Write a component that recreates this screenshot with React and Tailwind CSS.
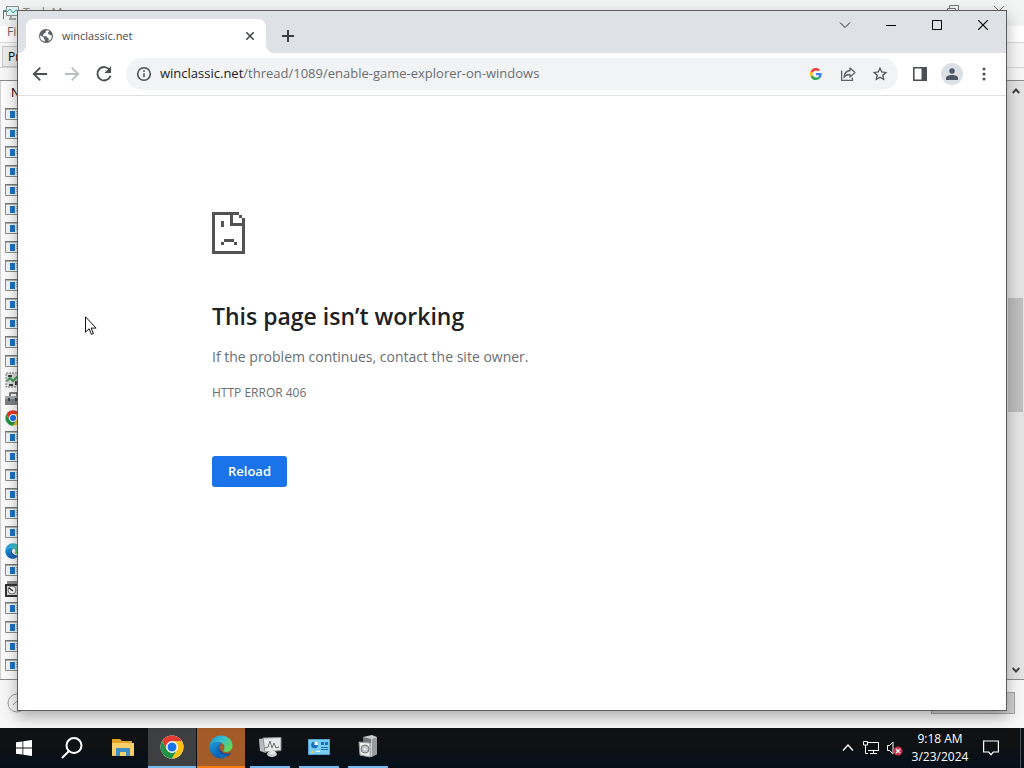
import clsx from 'clsx';

const UI_FONT = "font-['Segoe_UI','Open_Sans',sans-serif]";

const SPECIAL_ROWS = { 14: 'services', 15: 'toolbox', 16: 'chrome', 23: 'edge', 25: 'disk' };
const PROCESSES = Array.from({ length: 30 }, (_, i) => SPECIAL_ROWS[i] || 'app');

/* ─── ICONS ─── */

function ChromeLogo({ className }) {
  return (
    <svg viewBox="0 0 48 48" className={className} aria-hidden="true">
      <circle cx="24" cy="24" r="23" fill="#fff" />
      <path d="M4.1 12.5A23 23 0 0 1 43.9 12.5H24a11.5 11.5 0 0 0-10 17.2z" fill="#e33b2e" />
      <path d="M43.9 12.5A23 23 0 0 1 24 47l10-17.3a11.5 11.5 0 0 0-10-17.2z" fill="#fbc116" />
      <path d="M24 47A23 23 0 0 1 4.1 12.5L14 29.7a11.5 11.5 0 0 0 20 0z" fill="#229342" />
      <circle cx="24" cy="24" r="11.5" fill="#fff" />
      <circle cx="24" cy="24" r="9" fill="#1a73e8" />
    </svg>
  );
}

function EdgeLogo({ className }) {
  return (
    <svg viewBox="0 0 48 48" className={className} aria-hidden="true">
      <defs>
        <linearGradient id="edge-top" x1="0" y1="0" x2="1" y2="0.6">
          <stop offset="0" stopColor="#1a8fd8" />
          <stop offset="0.5" stopColor="#35bdd0" />
          <stop offset="1" stopColor="#63d95a" />
        </linearGradient>
        <linearGradient id="edge-base" x1="0" y1="0" x2="0.5" y2="1">
          <stop offset="0" stopColor="#1b9de2" />
          <stop offset="1" stopColor="#0a5cad" />
        </linearGradient>
      </defs>
      <path d="M1 23C2 10 12 1 24 1c13 0 23 9 23 20 0 8-6 13-12 13-5 0-7-2-6-4 1-1 2-3 2-6 0-6-6-10-13-10C9 14 2 18 1 23z" fill="url(#edge-top)" />
      <path d="M1 23c1-6 8-9 16-9 4 0 8 2 10 4-6-1-11 4-11 12 0 8 5 15 12 17C13 49 0 38 1 23z" fill="url(#edge-base)" />
      <path d="M19 23c-4 8 0 18 11 20 5 1 10-1 14-6 1-1 0-2-1-1-9 4-21-1-24-13z" fill="#0d4c93" />
      <path d="M28 47c-9-3-14-11-12-20 1-5 4-8 8-9-3 3-5 6-4 10 1 8 8 13 17 11-2 5-5 7-9 8z" fill="#1267b4" />
    </svg>
  );
}

function ProcessIcon({ kind }) {
  if (kind === 'chrome') return <ChromeLogo className="size-4" />;
  if (kind === 'edge') return <EdgeLogo className="size-4" />;
  if (kind === 'services') {
    return (
      <svg viewBox="0 0 16 16" className="size-4" aria-hidden="true">
        <path d="M1 1h13v14H1z" fill="#d8dcd8" stroke="#777" strokeDasharray="2 1" />
        <path d="M2 9l3-3 3 3 5-5" stroke="#3f9a55" strokeWidth="2" fill="none" />
        <path d="M3 3h4v2H3zM4 12h4v2H4zM10 9h3v4h-3z" fill="#444" />
      </svg>
    );
  }
  if (kind === 'toolbox') {
    return (
      <svg viewBox="0 0 16 16" className="size-4" aria-hidden="true">
        <path d="M5 5V2h7v3" stroke="#555" strokeWidth="1.5" fill="none" />
        <path d="M0 5h16v9H0z" fill="#7b8286" />
        <path d="M0 5h16v3H0z" fill="#a4abae" />
        <path d="M3 7h2v3H3zM10 7h2v3h-2z" fill="#3d4245" />
      </svg>
    );
  }
  if (kind === 'disk') {
    return (
      <svg viewBox="0 0 16 16" className="size-4" aria-hidden="true">
        <path d="M2 0h14v3H2z" fill="#8b8b8b" />
        <path d="M1 4h13v11H1z" fill="#ddd" stroke="#333" strokeWidth="2" />
        <circle cx="7" cy="9" r="4" fill="#fff" stroke="#777" />
        <path d="M4 7l4 3" stroke="#333" strokeWidth="1.5" />
      </svg>
    );
  }
  return (
    <svg viewBox="0 0 16 16" className="size-4" aria-hidden="true">
      <path d="M.5 2.500h15v11H.5z" fill="#f3f5f6" stroke="#8b8f92" />
      <path d="M0 2h16v1.500H0z" fill="#74787b" />
      <path d="M5 5h5v7H5z" fill="#1b74c5" />
      <path d="M11 5.500h4M11 7.500h4M11 9.500h4" stroke="#92aec4" />
    </svg>
  );
}

/* ─── TASK MANAGER (behind) ─── */

function TaskManager() {
  return (
    <section className="absolute inset-0 flex flex-col overflow-hidden bg-[#f7f7f7] text-xs">
      <header className="flex h-[26px] shrink-0 items-center gap-1 bg-[#f2f3f3] pl-[3px] text-[#8a8a8a]">
        <svg viewBox="0 0 16 16" className="size-4" aria-hidden="true">
          <path d="M0 6v8M0 6h3" stroke="#3c8f8a" strokeWidth="2" fill="none" />
          <path d="M3.500 1.500h12v9h-12z" fill="#e3f4f5" stroke="#8d9496" />
          <path d="M4 7l3-3 3 4 3-3 2 1" stroke="#2aa39b" fill="none" />
          <path d="M8 11v2M6 14h7" stroke="#8d9496" strokeWidth="1.500" />
        </svg>
        <span>Task Manager</span>
        <div className="ml-auto flex h-full items-start gap-[34px] pt-[5px] pr-[19px]">
          <button aria-label="Restore">
            <svg viewBox="0 0 12 12" className="size-3" fill="none" stroke="#777" aria-hidden="true">
              <path d="M2.500 3V.500h9v8H9M.500 3.500h8v8h-8z" />
            </svg>
          </button>
          <button aria-label="Close">
            <svg viewBox="0 0 12 12" className="size-3" stroke="#777" aria-hidden="true">
              <path d="M1 1l10 10M11 1L1 11" />
            </svg>
          </button>
        </div>
      </header>
      <nav className="flex h-[17px] shrink-0 items-center border-b border-[#d9d9d9] bg-white pb-1 pl-[7px] text-[#666]">
        <button>File</button>
      </nav>
      <div className="flex h-[25px] shrink-0 items-end border-b border-[#d5d5d5] pl-[2px]">
        <button className="h-[21px] border border-[#c8c8c8] bg-[#ececec] px-[5px] text-black">Processes</button>
      </div>
      <div className="mt-3 flex min-h-0 flex-1 border-y border-[#8b8b8b] bg-[#fcfcfc]">
        <div className="min-w-0 flex-1 border-l border-[#d0d0d0]">
          <div className="flex h-[23px] items-center pl-[10px] text-black">Name</div>
          <ul>
            {PROCESSES.map((kind, i) => (
              <li key={i} className="flex h-[19px] items-center pl-1">
                <ProcessIcon kind={kind} />
              </li>
            ))}
          </ul>
        </div>
        <div className="flex w-[17px] flex-col items-center bg-[#e4e4e4]">
          <ScrollArrow up />
          <div className="w-full flex-[198]" />
          <div className="w-[15px] flex-[114] bg-[#bdbdbd]" />
          <div className="w-full flex-[248]" />
          <ScrollArrow />
        </div>
      </div>
      <footer className="flex h-12 shrink-0 justify-between pr-[9px] pl-[7px]">
        <svg viewBox="0 0 20 20" className="mt-[13px] size-5" fill="none" stroke="#9a9a9a" aria-hidden="true">
          <circle cx="10" cy="10" r="9" />
          <path d="M6 12l4-4 4 4" />
        </svg>
        <button aria-label="End task" className="mt-3 h-[22px] w-[84px] border border-[#a6a6a6] bg-[#cfcfcf]" />
      </footer>
    </section>
  );
}

function ScrollArrow({ up }) {
  return (
    <button className="flex h-[19px] w-full shrink-0 items-center justify-center" aria-label={up ? 'Scroll up' : 'Scroll down'}>
      <svg viewBox="0 0 8 6" className={clsx('h-[6px] w-2', !up && 'rotate-180')} fill="none" stroke="#444" strokeWidth="2" aria-hidden="true">
        <path d="M.7 5L4 1.500 7.300 5" />
      </svg>
    </button>
  );
}

/* ─── BROWSER ─── */

function TabStrip() {
  return (
    <header className="flex h-[42px] shrink-0 items-stretch bg-[#dee1e6] pl-2">
      <div className="relative mt-2 flex w-60 items-center rounded-t-lg bg-white px-3">
        <svg viewBox="0 0 8 8" className="absolute bottom-0 -left-2 size-2" fill="#fff" aria-hidden="true">
          <path d="M8 0v8H0a8 8 0 0 0 8-8z" />
        </svg>
        <svg viewBox="0 0 8 8" className="absolute -right-2 bottom-0 size-2" fill="#fff" aria-hidden="true">
          <path d="M0 0v8h8a8 8 0 0 1-8-8z" />
        </svg>
        <svg viewBox="0 0 16 16" className="size-4" aria-hidden="true">
          <circle cx="8" cy="8" r="7" fill="#5f6368" />
          <path d="M9 2.300c-1 .5-1.600 1.200-1.400 2C7.700 5 7 5.400 6 5.600c-.8.200-.3 1.400-1 1.700l.2.900h3c1 0 1 1 1.200 1.600.5.500 1.500.2 1.400 1.200l-.3 2.200A5.800 5.800 0 0 0 13.700 7c-.6.300-1.500.4-2-.2-.4-.5-1.500-.4-1.700-1.300-.2-.9.800-1.600 1.400-2.200A6 6 0 0 0 9 2.300z" fill="#fff" />
          <path d="M2.200 7.300c1 .8 2.300 1.200 3.200 2 .7.600.3 1.600 1 2 .7.500.4 1.500.3 2.400a5.900 5.900 0 0 1-4.500-6.400z" fill="#fff" />
        </svg>
        <span className="ml-2 flex-1 text-[11px] text-[#45494d]">winclassic.net</span>
        <button aria-label="Close tab">
          <svg viewBox="0 0 8 8" className="size-2" stroke="#3c4043" strokeWidth="1.500" aria-hidden="true">
            <path d="M.3.300l7.400 7.400M7.700.300L.3 7.700" />
          </svg>
        </button>
      </div>
      <button aria-label="New tab" className="mt-2 ml-4">
        <svg viewBox="0 0 12 12" className="size-3" stroke="#3c4043" strokeWidth="2" aria-hidden="true">
          <path d="M6 0v12M0 6h12" />
        </svg>
      </button>
      <div className="mb-[14px] ml-auto flex items-center">
        <button aria-label="Search tabs" className="flex w-[46px] justify-center">
          <svg viewBox="0 0 12 12" className="size-3" fill="none" stroke="#222" aria-hidden="true">
            <path d="M1 3.500l5 5 5-5" />
          </svg>
        </button>
        <button aria-label="Minimize" className="flex w-[46px] justify-center">
          <svg viewBox="0 0 10 10" className="size-[10px]" stroke="#000" aria-hidden="true">
            <path d="M0 5.500h10" />
          </svg>
        </button>
        <button aria-label="Maximize" className="flex w-[46px] justify-center">
          <svg viewBox="0 0 10 10" className="size-[10px]" fill="none" stroke="#000" aria-hidden="true">
            <path d="M.5.500h9v9h-9z" />
          </svg>
        </button>
        <button aria-label="Close" className="flex w-[46px] justify-center">
          <svg viewBox="0 0 10 10" className="size-[10px]" stroke="#000" strokeWidth="1.200" aria-hidden="true">
            <path d="M0 0l10 10M10 0L0 10" />
          </svg>
        </button>
      </div>
    </header>
  );
}

function Toolbar() {
  return (
    <div className="flex h-[43px] shrink-0 items-center border-b border-[#dfe1e4] bg-white pr-[14px] pl-3">
      <div className="flex items-center gap-3">
        <button aria-label="Back">
          <svg viewBox="0 0 24 24" className="size-5" fill="#4b4f53" aria-hidden="true">
            <path d="M20.500 10.800H7.400l5.700-5.700-1.600-1.600L3 12l8.500 8.500 1.600-1.600-5.700-5.700h13.100z" />
          </svg>
        </button>
        <button aria-label="Forward" disabled>
          <svg viewBox="0 0 24 24" className="size-5 rotate-180" fill="#bcbec1" aria-hidden="true">
            <path d="M20.500 10.800H7.400l5.700-5.700-1.600-1.600L3 12l8.500 8.500 1.600-1.600-5.700-5.700h13.100z" />
          </svg>
        </button>
        <button aria-label="Reload page">
          <svg viewBox="0 0 24 24" className="size-5" fill="none" stroke="#4b4f53" strokeWidth="2.300" aria-hidden="true">
            <path d="M19 7.600A8 8 0 1 0 19.800 14" />
            <path d="M20.500 2.800v8h-8z" fill="#4b4f53" stroke="none" />
          </svg>
        </button>
      </div>
      <div className="ml-3 flex h-8 flex-1 items-center rounded-full bg-[#f1f3f4] pr-[10px] pl-[10px]">
        <button aria-label="View site information">
          <svg viewBox="0 0 16 16" className="size-4" fill="none" stroke="#4b4f53" strokeWidth="1.500" aria-hidden="true">
            <circle cx="8" cy="8" r="6.300" />
            <path d="M8 7.200v4M8 4.300v1.600" />
          </svg>
        </button>
        <div className="ml-2 flex-1 text-[13px] text-[#6a6e73]">
          <span className="text-[#202124]">winclassic.net</span>/thread/1089/enable-game-explorer-on-windows
        </div>
        <div className="flex items-center gap-4">
          <button aria-label="Search with Google">
            <svg viewBox="0 0 48 48" className="size-4 p-[2px]" aria-hidden="true">
              <path d="M46.500 24.500c0-1.600-.2-3.200-.4-4.700H24v9h12.700c-.6 3-2.200 5.400-4.700 7.100l7.600 5.900c4.400-4.100 6.900-10.100 6.900-17.300z" fill="#4285f4" />
              <path d="M24 48c6.500 0 11.900-2.100 15.900-5.800L32 36c-2.200 1.500-4.900 2.300-8 2.300-6.300 0-11.600-4.200-13.500-9.900l-7.900 6.200A24 24 0 0 0 24 48z" fill="#34a853" />
              <path d="M10.500 28.600a14.500 14.500 0 0 1 0-9.200l-7.900-6.200a24 24 0 0 0 0 21.600z" fill="#fbbc05" />
              <path d="M24 9.500c3.500 0 6.700 1.200 9.200 3.600l6.900-6.900A24 24 0 0 0 2.600 13.200l7.900 6.200C12.400 13.700 17.700 9.500 24 9.500z" fill="#ea4335" />
            </svg>
          </button>
          <button aria-label="Share this page">
            <svg viewBox="0 0 16 16" className="size-4" fill="none" stroke="#5f6368" strokeWidth="1.300" aria-hidden="true">
              <path d="M1.600 4.500v9.900h10.800v-3" />
              <path d="M10 2l5 4.500-5 4.500V8.500c-3 0-5 1-6 3 .2-4 2-6.500 6-7z" strokeLinejoin="round" />
            </svg>
          </button>
          <button aria-label="Bookmark this tab">
            <svg viewBox="0 0 24 24" className="size-4" fill="#4b4f53" aria-hidden="true">
              <path d="M23 9.100l-7.700-.700L12 1.200 8.700 8.400 1 9.100l5.800 5.100L5 21.900l7-4 7 4-1.800-7.700zM12 15.700l-4.200 2.500 1.100-4.700-3.700-3.200 4.900-.4L12 5.400l1.900 4.500 4.900.4-3.700 3.200 1.100 4.700z" />
            </svg>
          </button>
        </div>
      </div>
      <div className="ml-[14px] flex items-center gap-[13px]">
        <button aria-label="Side panel">
          <svg viewBox="0 0 16 16" className="size-4" fill="none" stroke="#4b4f53" strokeWidth="1.600" aria-hidden="true">
            <path d="M1.800 1.800h12.400v12.400H1.800z" />
            <path d="M9.500 1h5.500v14H9.500z" fill="#4b4f53" stroke="none" />
          </svg>
        </button>
        <button aria-label="Profile" className="flex size-[22px] items-center justify-center rounded-full bg-[#dbdfe6]">
          <svg viewBox="0 0 12 12" className="size-3" fill="#4f5763" aria-hidden="true">
            <circle cx="6" cy="3" r="2.700" />
            <path d="M0 12V10c0-2 3-3 6-3s6 1 6 3v2z" />
          </svg>
        </button>
        <button aria-label="Menu">
          <svg viewBox="0 0 16 16" className="size-4" fill="#4b4f53" aria-hidden="true">
            <circle cx="8" cy="3" r="1.500" />
            <circle cx="8" cy="8" r="1.500" />
            <circle cx="8" cy="13" r="1.500" />
          </svg>
        </button>
      </div>
    </div>
  );
}

function ErrorPage() {
  return (
    <main className="min-h-0 flex-1 overflow-hidden bg-white px-[194px] pt-[115px]">
      <svg viewBox="0 0 36 44" className="h-11 w-9" fill="#535353" shapeRendering="crispEdges" aria-hidden="true">
        <path d="M0 1h27v3H21v8h9V10h3v33H0zM3 4v36h27V15H18V4z" fillRule="evenodd" />
        <path d="M27 4h3v3h-3zM30 7h3v3h-3zM9 10h3v6H9zM12 28h10v3H12zM9 31h3v3H9zM22 31h3v3h-3z" />
      </svg>
      <h1 className="mt-[43px] text-[23px] leading-9 font-semibold text-[#202124]">This page isn’t working</h1>
      <p className="mt-[11px] text-sm leading-6 text-[#6a6e73]">If the problem continues, contact the site owner.</p>
      <p className="mt-3 text-xs leading-6 text-[#6a6e73]">HTTP ERROR 406</p>
      <button className="mt-[51px] h-[31px] rounded-[3px] bg-[#1a73e8] px-4 text-[13px] font-semibold text-white">
        Reload
      </button>
    </main>
  );
}

function BrowserWindow() {
  return (
    <section className="absolute inset-x-[17px] top-[10px] bottom-[17px] flex flex-col border border-[#5c5c5c] bg-white shadow-[0_6px_14px_rgba(0,0,0,0.3)]">
      <TabStrip />
      <Toolbar />
      <ErrorPage />
    </section>
  );
}

/* ─── TASKBAR ─── */

function TaskButton({ label, active, alert, running, children }) {
  return (
    <button
      aria-label={label}
      className={clsx(
        'flex h-full w-12 flex-col items-center',
        active && 'bg-[#3d3f40]',
        alert && 'bg-[#a35c27]',
      )}
    >
      <span className="flex flex-1 items-center">{children}</span>
      {active && <span className="h-[2px] w-full bg-[#76b9ed]" />}
      {alert && <span className="h-[2px] w-full bg-[#f57c13]" />}
      {running && <span className="h-[2px] w-10 bg-[#76b9ed]" />}
    </button>
  );
}

function Taskbar() {
  return (
    <footer className="flex h-10 shrink-0 items-stretch bg-linear-to-b from-[#101112] from-40% to-[#03101c] text-white">
      <div className="flex">
        <TaskButton label="Start">
          <svg viewBox="0 0 16 16" className="size-4" fill="#fff" aria-hidden="true">
            <path d="M0 2.300l6.500-.900v6.200H0zM7.300 1.300L16 0v7.600H7.300zM0 8.400h6.500v6.200L0 13.700zM7.300 8.400H16V16l-8.700-1.300z" />
          </svg>
        </TaskButton>
        <TaskButton label="Search">
          <svg viewBox="0 0 22 22" className="size-[22px]" fill="none" stroke="#fff" strokeWidth="2" aria-hidden="true">
            <circle cx="13" cy="8.500" r="7.500" />
            <path d="M8 14l-7 7" />
          </svg>
        </TaskButton>
      </div>
      <div className="ml-[3px] flex gap-px">
        <TaskButton label="File Explorer">
          <svg viewBox="0 0 22 20" className="h-5 w-[22px]" aria-hidden="true">
            <path d="M0 1h8l2 2h10v3H0z" fill="#e2a32b" />
            <path d="M0 5h22v13H0z" fill="#f7d06b" />
            <path d="M4 10h14v8h-4v-4H8v4H4z" fill="#3f8fc6" />
            <path d="M0 17h4v1H0zM18 17h4v1h-4z" fill="#e6b44b" />
          </svg>
        </TaskButton>
        <TaskButton label="Google Chrome" active>
          <ChromeLogo className="size-6" />
        </TaskButton>
        <TaskButton label="Microsoft Edge" alert>
          <EdgeLogo className="size-6" />
        </TaskButton>
        <TaskButton label="Task Manager" running>
          <svg viewBox="0 0 24 24" className="size-6" aria-hidden="true">
            <path d="M1 4l7-1v15l-6-2z" fill="#b9bcbe" />
            <path d="M5 3l18-.5v13L7 17z" fill="#e8eaea" stroke="#8d9193" />
            <path d="M7 13l3-1 2-6 2 7 2-5 2 5 3-1" fill="none" stroke="#6d7376" />
            <ellipse cx="14" cy="19" rx="5" ry="3" fill="#cdd0d1" />
            <path d="M12 16h5v3h-5z" fill="#e3e5e5" />
          </svg>
        </TaskButton>
        <TaskButton label="Control Panel" running>
          <svg viewBox="0 0 22 16" className="h-4 w-[22px]" aria-hidden="true">
            <path d="M.5.500h21v15H.5z" fill="#79cdf0" stroke="#4fa5d3" />
            <circle cx="6.500" cy="6" r="3.500" fill="#fff" />
            <path d="M6.500 6V2.500A3.500 3.500 0 1 0 10 6z" fill="#1672bd" />
            <path d="M13 3h3v3h-3zM17 3h3v3h-3zM13 8h7v1h-7zM13 10h7v1h-7z" fill="#1672bd" />
            <path d="M3 12h3v2H3z" fill="#f2c744" />
            <path d="M8 12h4v1H8z" fill="#fff" />
          </svg>
        </TaskButton>
        <TaskButton label="Programs" running>
          <svg viewBox="0 0 20 24" className="h-6 w-5" aria-hidden="true">
            <path d="M5 2l9-2 5 2v17l-6 3-8-2z" fill="#c9cccd" />
            <path d="M5 2l8 2v4H5z" fill="#6f7476" />
            <path d="M14 4l5-2v17l-5 3z" fill="#979b9d" />
            <path d="M1 7l11 1v14L2 20z" fill="#ebeced" stroke="#9a9d9f" />
            <circle cx="7" cy="14" r="4" fill="#bfc3c5" stroke="#777" />
            <circle cx="7" cy="14" r="1.300" fill="#fff" />
          </svg>
        </TaskButton>
      </div>
      <div className="ml-auto flex items-center">
        <button aria-label="Show hidden icons">
          <svg viewBox="0 0 12 12" className="size-3" fill="none" stroke="#fff" strokeWidth="1.300" aria-hidden="true">
            <path d="M1 8.500L6 3l5 5.500" />
          </svg>
        </button>
        <button aria-label="Network" className="ml-[9px]">
          <svg viewBox="0 0 16 16" className="size-4" fill="none" stroke="#fff" aria-hidden="true">
            <path d="M5 2.500h10.500v8H5M7 13.500h7M10.500 11v2M2.500 5v8.500H5M.500 1.500h4v3.500h-4z" />
          </svg>
        </button>
        <button aria-label="Volume muted" className="ml-2">
          <svg viewBox="0 0 16 16" className="size-4" fill="none" aria-hidden="true">
            <path d="M.5 5.500h2L6 2v12l-3.500-3.500h-2z" stroke="#fff" />
            <circle cx="11" cy="11" r="4.500" fill="#c8334b" />
            <path d="M9 9l4 4M13 9l-4 4" stroke="#fff" strokeWidth="1.200" />
          </svg>
        </button>
        <div className="ml-2 w-[58px] text-center text-xs leading-[18px] whitespace-nowrap">
          <div>9:18 AM</div>
          <div>3/23/2024</div>
        </div>
        <button aria-label="Notifications" className="ml-[14px]">
          <svg viewBox="0 0 16 16" className="size-4" fill="none" stroke="#fff" strokeWidth="1.200" aria-hidden="true">
            <path d="M.600 1h14.800v11h-5.200L8 14.700 5.800 12H.600z" />
          </svg>
        </button>
        <button aria-label="Show desktop" className="ml-[21px] h-full w-1 border-l border-[#4a5158]" />
      </div>
    </footer>
  );
}

export default function App() {
  return (
    <div className={clsx('flex h-screen w-full flex-col overflow-hidden', UI_FONT)}>
      <div className="relative min-h-0 flex-1">
        <TaskManager />
        <BrowserWindow />
        {/* mouse pointer */}
        <svg viewBox="0 0 12 20" className="absolute top-[316px] left-[85px] h-5 w-3" fill="#fff" stroke="#111" aria-hidden="true">
          <path d="M.5.800v15.400l3.600-3.400 2.400 5.600 2-.900-2.400-5.400h5z" />
        </svg>
      </div>
      <Taskbar />
    </div>
  );
}
